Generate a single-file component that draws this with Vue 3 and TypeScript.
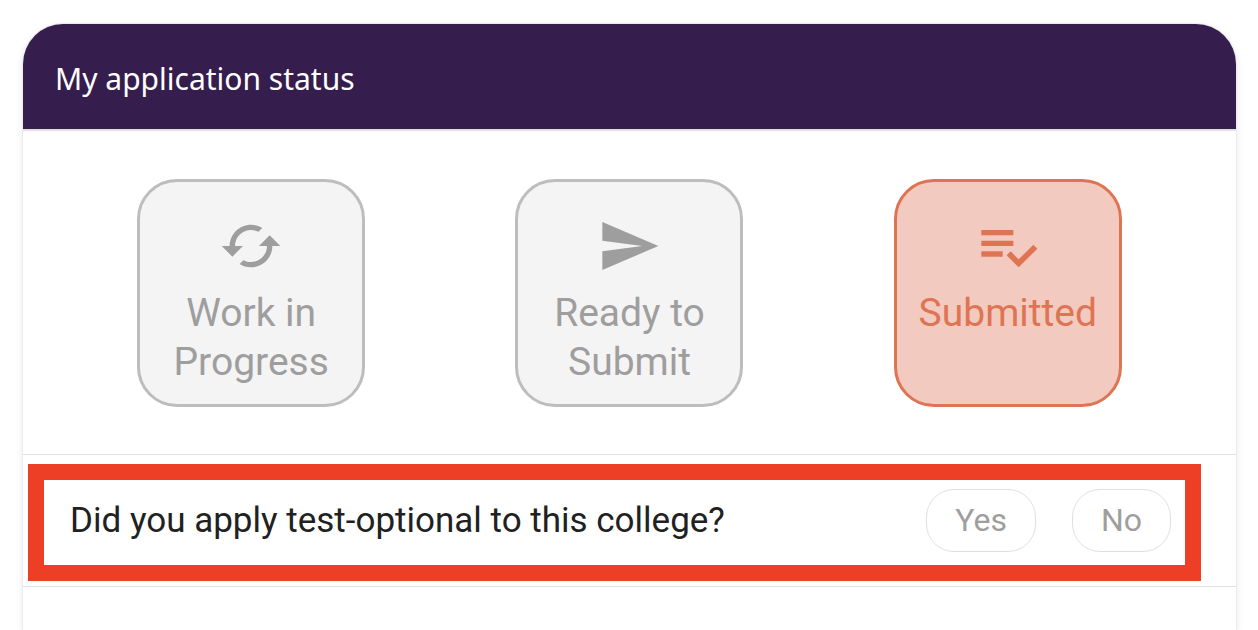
<script setup lang="ts">
import { ref } from 'vue'

interface Status {
  label: string
  icon: string
}

const statuses: Status[] = [
  {
    label: 'Work in Progress',
    icon: 'M19 8l-4 4h3c0 3.31-2.69 6-6 6-1.01 0-1.97-.25-2.8-.7l-1.46 1.46C8.97 19.54 10.43 20 12 20c4.42 0 8-3.58 8-8h3l-4-4zM6 12c0-3.31 2.69-6 6-6 1.01 0 1.97.25 2.8.7l1.46-1.46C15.03 4.46 13.57 4 12 4c-4.42 0-8 3.58-8 8H1l4 4 4-4H6z',
  },
  {
    label: 'Ready to Submit',
    icon: 'M2.01 21L23 12 2.01 3 2 10l15 2-15 2z',
  },
  {
    label: 'Submitted',
    icon: 'M14 10H2v2h12v-2zm0-4H2v2h12V6zM2 16h8v-2H2v2zm19.5-4.5L23 13l-6.99 7-4.51-4.5L13 14l3.01 3 5.49-5.5z',
  },
]

const answers = ['Yes', 'No']

const current = ref('Submitted')
const answer = ref('')
</script>

<template>
  <main class="page">
    <section class="card">
      <h1 class="title">My application status</h1>

      <div class="statuses">
        <button
          v-for="status in statuses"
          :key="status.label"
          type="button"
          class="status"
          :class="{ active: status.label === current }"
          :aria-pressed="status.label === current"
          @click="current = status.label"
        >
          <svg class="icon" viewBox="0 0 24 24" aria-hidden="true">
            <path :d="status.icon" />
          </svg>
          <span>{{ status.label }}</span>
        </button>
      </div>

      <div class="question-row">
        <div class="highlight" role="group" aria-labelledby="test-optional">
          <p id="test-optional" class="question">Did you apply test-optional to this college?</p>
          <div class="answers">
            <button
              v-for="option in answers"
              :key="option"
              type="button"
              class="answer"
              :class="{ chosen: option === answer }"
              :aria-pressed="option === answer"
              @click="answer = option"
            >
              {{ option }}
            </button>
          </div>
        </div>
      </div>
    </section>
  </main>
</template>

<style>
body {
  margin: 0;
  background: #fff;
}
</style>

<style scoped>
.page {
  box-sizing: border-box;
  min-height: 100vh;
  padding: 24px 22px 0 23px;
  display: flex;
  overflow: hidden;
  font-family: Roboto, "Liberation Sans", sans-serif;
}

.card {
  flex: 1;
  min-width: 0;
  background: #fff;
  border-radius: 40px 40px 0 0;
  box-shadow: 0 0 0 1px #ececec, 0 2px 8px rgba(0, 0, 0, 0.1);
}

.title {
  margin: 0;
  padding: 34px 32px 30px;
  border-bottom: 2px solid #e0e0e0;
  border-radius: 40px 40px 0 0;
  background: #351d4d;
  background-clip: padding-box;
  color: #fff;
  font-family: "Noto Sans", "Open Sans", sans-serif;
  font-size: 30px;
  font-weight: 400;
  line-height: 41px;
}

.statuses {
  display: grid;
  grid-template-columns: repeat(3, 1fr);
  justify-items: center;
  padding: 48px 39px 47px;
  border-bottom: 1px solid #e0e0e0;
}

.status {
  box-sizing: border-box;
  width: 228px;
  min-height: 228px;
  padding: 32px 16px 14px;
  display: flex;
  flex-direction: column;
  align-items: center;
  gap: 11px;
  border: 3px solid #bdbdbd;
  border-radius: 40px;
  background: #f4f4f4;
  color: #9e9e9e;
  font: inherit;
  font-size: 39px;
  line-height: 49px;
  text-align: center;
  cursor: pointer;
}

.status.active {
  border-color: #df7453;
  background: #f2cac0;
  color: #df7453;
}

.icon {
  width: 64px;
  height: 64px;
  fill: currentColor;
}

.question-row {
  padding: 9px 35px 5px 5px;
  border-bottom: 1px solid #e0e0e0;
}

.highlight {
  display: flex;
  align-items: center;
  justify-content: space-between;
  padding: 9px 14px 13px 26px;
  border: 16px solid #ec3f26;
}

.question {
  margin: 0;
  color: #212121;
  font-size: 35px;
  line-height: 48px;
}

.answers {
  display: flex;
  gap: 36px;
}

.answer {
  padding: 12px 28px;
  border: 1px solid #e0e0e0;
  border-radius: 28px;
  background: #fff;
  color: #9e9e9e;
  font: inherit;
  font-size: 32px;
  line-height: 37px;
  cursor: pointer;
}

.answer.chosen {
  border-color: #df7453;
  color: #df7453;
}
</style>
